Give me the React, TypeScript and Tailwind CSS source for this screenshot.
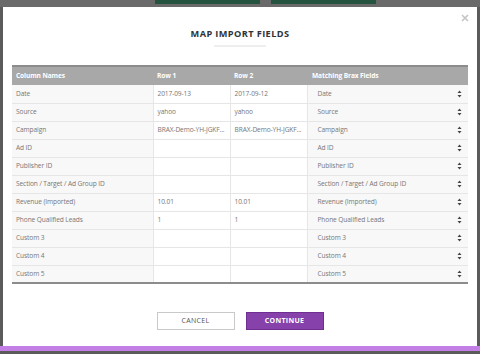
import React from "react";

const rows: [string, string, string][] = [
  ["Date", "2017-09-13", "2017-09-12"],
  ["Source", "yahoo", "yahoo"],
  ["Campaign", "BRAX-Demo-YH-JGKF...", "BRAX-Demo-YH-JGKF..."],
  ["Ad ID", "", ""],
  ["Publisher ID", "", ""],
  ["Section / Target / Ad Group ID", "", ""],
  ["Revenue (Imported)", "10.01", "10.01"],
  ["Phone Qualified Leads", "1", "1"],
  ["Custom 3", "", ""],
  ["Custom 4", "", ""],
  ["Custom 5", "", ""],
];

function Arrows() {
  return (
    <svg width="5" height="8" viewBox="0 0 5 8" className="shrink-0">
      <path d="M2.5 0.5 L4.5 3 L0.5 3 Z" fill="#444" />
      <path d="M2.5 7.5 L4.5 5 L0.5 5 Z" fill="#444" />
    </svg>
  );
}

export default function App() {
  return (
    <div className="w-[480px] h-[354px] bg-[#5b5b5b] flex flex-col overflow-hidden font-['Open_Sans',sans-serif]">
      {/* page behind the overlay */}
      <div className="h-[7px] flex bg-[#6a6a6a] pl-[155px] gap-[11px] shrink-0">
        <div className="w-[105px] h-[4px] bg-[#24533f]" />
        <div className="w-[105px] h-[4px] bg-[#24533f]" />
      </div>

      {/* modal */}
      <div className="relative mx-[3px] h-[339px] bg-white flex flex-col items-center shrink-0">
        <svg
          width="8"
          height="8"
          viewBox="0 0 8 8"
          className="absolute right-[8px] top-[7px]"
        >
          <path d="M1 1 L7 7 M7 1 L1 7" stroke="#c4c4c4" strokeWidth="1.6" />
        </svg>

        <h1 className="mt-[20px] text-[9.2px] font-bold tracking-[0.4px] text-[#2f3337] leading-[14px]">
          MAP IMPORT FIELDS
        </h1>
        <div className="mt-[4px] w-[52px] h-[2px] bg-[#eeeeee]" />

        <table className="mt-[18px] w-[456px] table-fixed border-collapse text-[6.6px] tracking-[-0.1px] text-[#777]">
          <colgroup>
            <col className="w-[141px]" />
            <col className="w-[77px]" />
            <col className="w-[77px]" />
            <col className="w-[161px]" />
          </colgroup>
          <thead>
            <tr className="h-[19px] bg-[#a8a8a8] border-t-2 border-[#8c8c8c] text-white text-left">
              <th className="pl-[4px] font-bold">Column Names</th>
              <th className="pl-[4px] font-bold">Row 1</th>
              <th className="pl-[4px] font-bold">Row 2</th>
              <th className="pl-[5px] font-bold">Matching Brax Fields</th>
            </tr>
          </thead>
          <tbody className="border-b-2 border-[#8c8c8c]">
            {rows.map(([name, r1, r2]) => (
              <tr key={name} className="h-[18px] border-b border-[#e6e6e6] last:border-b-0">
                <td className="pl-[4px] bg-[#f8f8f8] whitespace-nowrap">{name}</td>
                <td className="pl-[4px] border-l border-[#e6e6e6] whitespace-nowrap overflow-hidden">{r1}</td>
                <td className="pl-[4px] border-l border-[#e6e6e6] whitespace-nowrap overflow-hidden">{r2}</td>
                <td className="border-l border-[#e6e6e6] bg-[#f8f8f8]">
                  <div className="flex items-center justify-between pl-[10px] pr-[6px]">
                    <span className="whitespace-nowrap">{name}</span>
                    <Arrows />
                  </div>
                </td>
              </tr>
            ))}
          </tbody>
        </table>

        <div className="mt-[28px] flex gap-[11px]">
          <button className="w-[78px] h-[18px] border border-[#c9c9c9] bg-white text-[7px] tracking-[0.3px] text-[#555]">
            CANCEL
          </button>
          <button className="w-[78px] h-[18px] border border-[#6e2f91] bg-[#8641aa] text-[7px] font-bold tracking-[0.3px] text-white">
            CONTINUE
          </button>
        </div>
      </div>

      <div className="h-[5px] bg-[#c47fe6] shrink-0" />
    </div>
  );
}
